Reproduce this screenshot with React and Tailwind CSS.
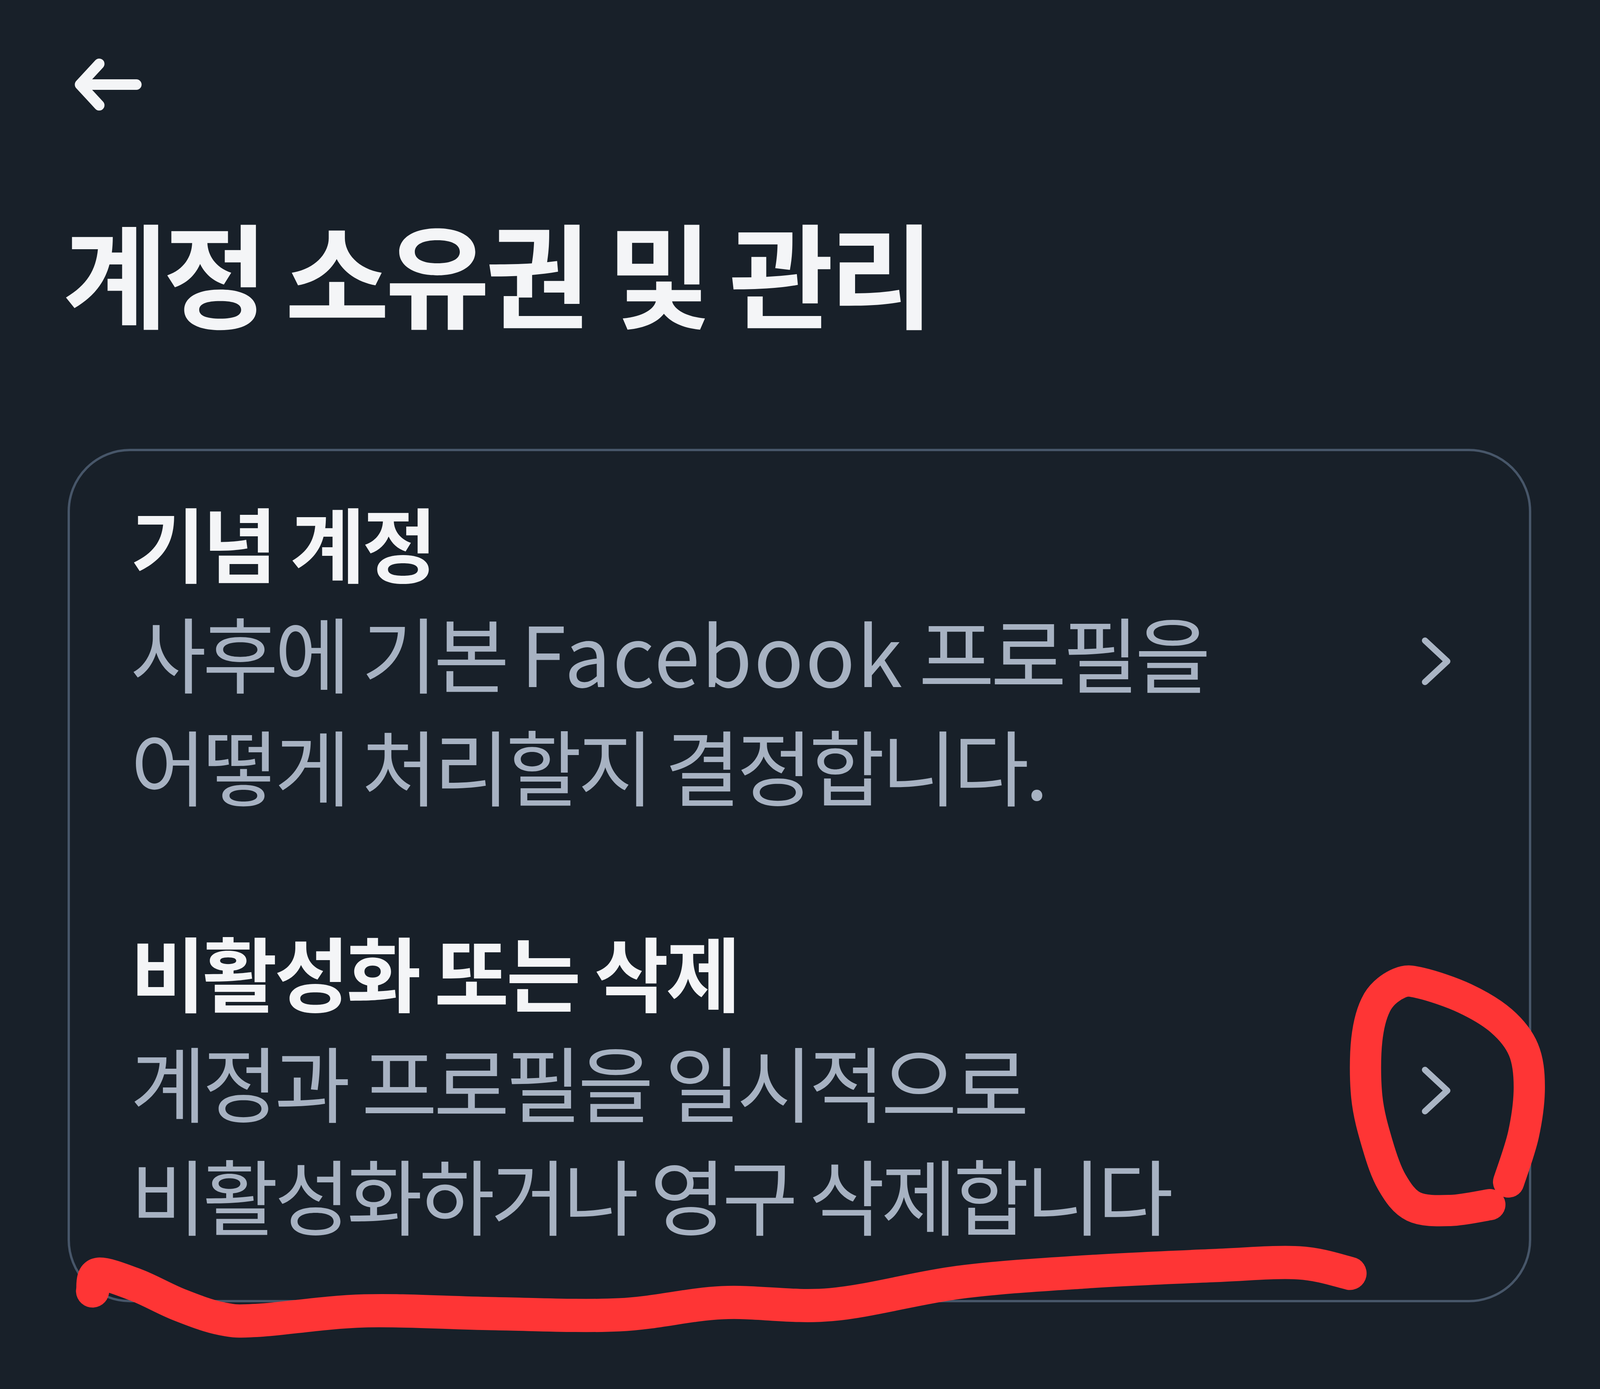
import React from 'react';

const items = [
  {
    title: '기념 계정',
    lines: [
      <>
        사후에 기본 <span className="tracking-[4px]">Facebook</span> 프로필을
      </>,
      '어떻게 처리할지 결정합니다.',
    ],
  },
  {
    title: '비활성화 또는 삭제',
    lines: ['계정과 프로필을 일시적으로', '비활성화하거나 영구 삭제합니다'],
  },
];

// hand-drawn marks over the screenshot
const circlePts = [
  [3862, 3026], [3900, 2905], [3915, 2783], [3900, 2687], [3844, 2614],
  [3750, 2556], [3638, 2517], [3582, 2517], [3526, 2565], [3499, 2662],
  [3499, 2808], [3526, 2929], [3563, 3026], [3619, 3089], [3713, 3099],
  [3814, 3084],
];

const underlinePts = [
  [237, 3305], [252, 3262], [349, 3290], [458, 3340], [567, 3376],
  [664, 3380], [933, 3356], [1259, 3363], [1585, 3366], [1849, 3335],
  [2127, 3340], [2454, 3283], [2781, 3256], [3108, 3240], [3325, 3233],
  [3456, 3260],
];

const smooth = (pts) => {
  let d = `M ${pts[0][0]} ${pts[0][1]}`;
  for (let i = 0; i < pts.length - 1; i++) {
    const p0 = pts[i - 1] || pts[i];
    const p1 = pts[i];
    const p2 = pts[i + 1];
    const p3 = pts[i + 2] || p2;
    const c1 = [p1[0] + (p2[0] - p0[0]) / 6, p1[1] + (p2[1] - p0[1]) / 6];
    const c2 = [p2[0] - (p3[0] - p1[0]) / 6, p2[1] - (p3[1] - p1[1]) / 6];
    d += ` C ${c1[0]} ${c1[1]} ${c2[0]} ${c2[1]} ${p2[0]} ${p2[1]}`;
  }
  return d;
};

const Chevron = () => (
  <svg width="80" height="122" viewBox="0 0 80 122" fill="none" className="mt-[36px] shrink-0">
    <path d="M10 8 L67 61 L10 114" stroke="#aab5c4" strokeWidth="16" strokeLinecap="round" strokeLinejoin="round" />
  </svg>
);

const Item = ({ title, lines }) => (
  <div className="flex items-center justify-between">
    <div>
      <p className="text-[208px] font-bold leading-[274px] tracking-[-7px] text-[#f4f5f7]">{title}</p>
      {lines.map((line, i) => (
        <p key={i} className="whitespace-nowrap text-[211px] leading-[289px] tracking-[-9.5px] text-[#a7b2c2]">
          {line}
        </p>
      ))}
    </div>
    <Chevron />
  </div>
);

export default function App() {
  return (
    <div className="relative h-[3556px] w-full overflow-hidden bg-[#182029] font-['Noto_Sans_CJK_KR',sans-serif]">
      <div className="flex flex-col">
        <button type="button" aria-label="뒤로" className="ml-[170px] mt-[141px] self-start">
          <svg width="200" height="150" viewBox="0 0 200 150" fill="none">
            <path d="M84 22.5 L35 75.5 L84 128.5 M35 75.5 H179" stroke="#f4f5f7" strokeWidth="27" strokeLinecap="round" strokeLinejoin="round" />
          </svg>
        </button>

        <h1 className="ml-[161px] mt-[256px] whitespace-nowrap text-[291px] font-bold leading-[291px] tracking-[-11px] text-[#f4f5f7]">
          계정 소유권 및 관리
        </h1>

        <div className="ml-[173px] mr-[176px] mt-[311px] flex flex-col gap-[247px] rounded-[160px] border-[6px] border-[#475669] pb-[128px] pl-[155px] pr-[196px] pt-[94px]">
          {items.map((item) => (
            <Item key={item.title} {...item} />
          ))}
        </div>
      </div>

      <svg className="pointer-events-none absolute left-0 top-0" width="4096" height="3556" viewBox="0 0 4096 3556" fill="none">
        <path d={smooth(circlePts)} stroke="#fe3535" strokeWidth="80" strokeLinecap="round" strokeLinejoin="round" />
        <path d={smooth(underlinePts)} stroke="#fe3535" strokeWidth="85" strokeLinecap="round" strokeLinejoin="round" />
      </svg>
    </div>
  );
}
